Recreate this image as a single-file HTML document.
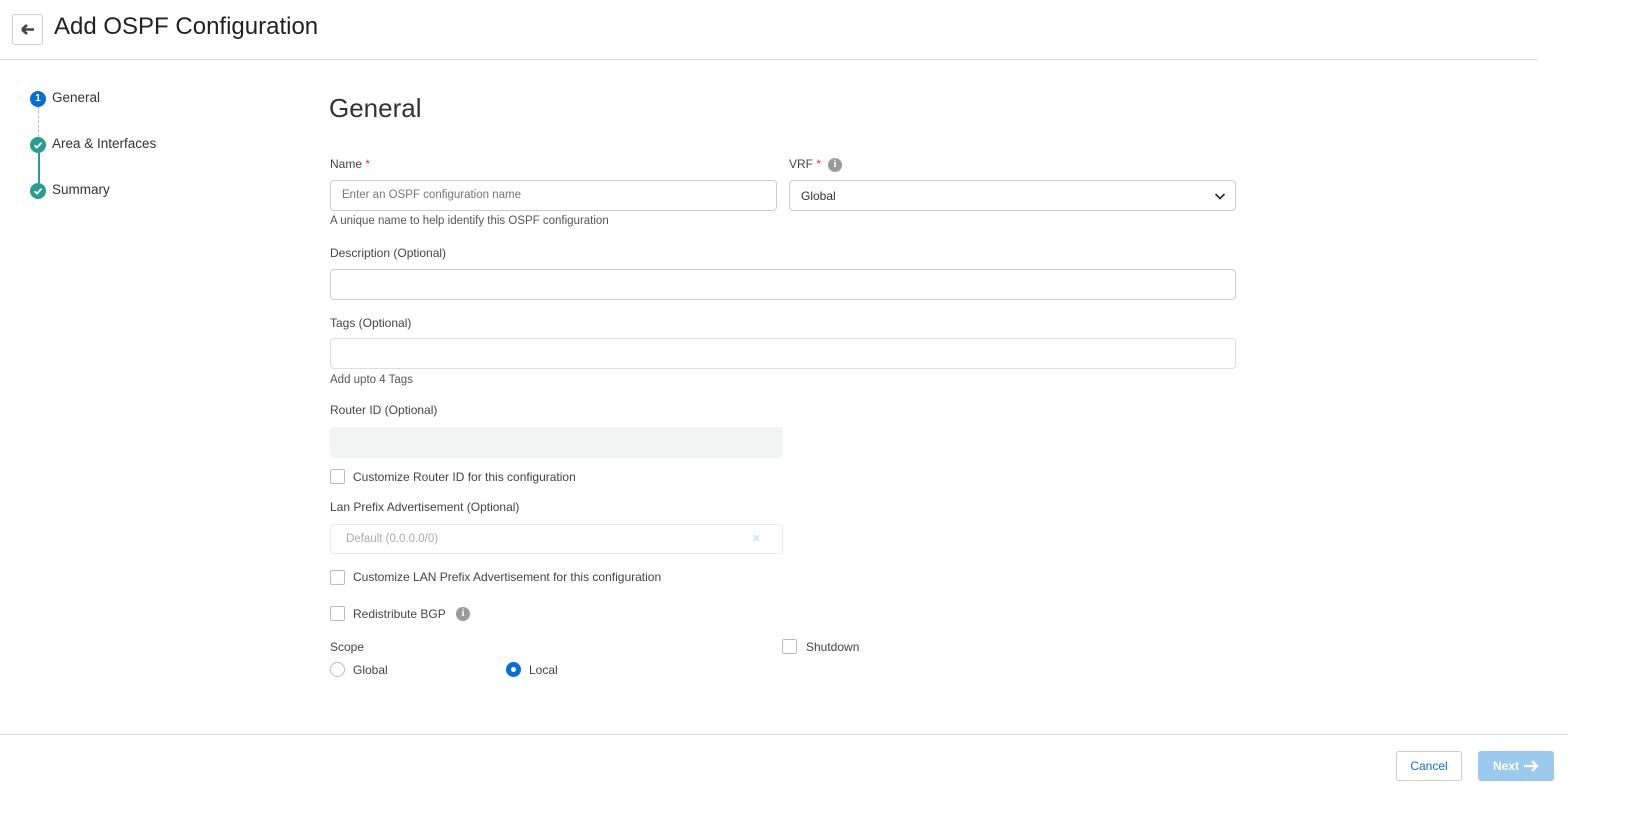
<!DOCTYPE html>
<html><head><meta charset="utf-8"><style>
*{box-sizing:border-box;margin:0;padding:0}
body{width:1626px;height:815px;background:#fff;font-family:"Liberation Sans",sans-serif;color:#333;position:relative;overflow:hidden}
.a{position:absolute;white-space:nowrap}
.lbl{font-size:12px;color:#444}
.help{font-size:11.5px;color:#555}
.inp{position:absolute;border:1px solid #ccc;border-radius:4px;background:#fff}
.cb{position:absolute;width:15px;height:15px;border:1px solid #bbb;border-radius:2px;background:#fff}
.ct{font-size:12px;color:#444}
.info{position:absolute;width:14px;height:14px;border-radius:50%;background:#9a9a9a;color:#fff;font-size:10px;font-weight:bold;text-align:center;line-height:14px;font-family:"Liberation Serif",serif}
.step{position:absolute;width:16px;height:16px;border-radius:50%;color:#fff;font-size:10px;font-weight:bold;text-align:center;line-height:16px}
.st{font-size:13.5px;color:#333}
</style></head><body>
<div class="a" style="left:12px;top:14px;width:31px;height:31px;border:1px solid #ccc;border-radius:3px;"><svg width="29" height="29" viewBox="0 0 29 29"><path d="M9 14.5H21M9 14.5l5-4.5M9 14.5l5 4.5" stroke="#444" stroke-width="2.6" fill="none"/></svg></div>
<div class="a" style="left:54px;top:13px;font-size:24px;color:#222">Add OSPF Configuration</div>
<div class="a" style="left:0;top:59px;width:1538px;height:1px;background:#d8d8d8"></div>

<div class="a" style="left:38px;top:106px;height:31px;border-left:1px dashed #bbb"></div>
<div class="a" style="left:38px;top:152px;width:2px;height:31px;background:#2a9d8f"></div>
<div class="step" style="left:30px;top:91px;background:#0a6ed1">1</div>
<div class="a st" style="left:52px;top:90px">General</div>
<div class="step" style="left:30px;top:137px;background:#2a9d8f"><svg width="16" height="16"><path d="M4.5 8.2l2.4 2.4 4.6-4.8" stroke="#fff" stroke-width="1.8" fill="none"/></svg></div>
<div class="a st" style="left:52px;top:136px">Area &amp; Interfaces</div>
<div class="step" style="left:30px;top:183px;background:#2a9d8f"><svg width="16" height="16"><path d="M4.5 8.2l2.4 2.4 4.6-4.8" stroke="#fff" stroke-width="1.8" fill="none"/></svg></div>
<div class="a st" style="left:52px;top:182px">Summary</div>

<div class="a" style="left:329px;top:93px;font-size:26px;font-weight:300;color:#333">General</div>

<div class="a lbl" style="left:330px;top:157px">Name <span style="color:#e0302f">*</span></div>
<div class="inp" style="left:330px;top:180px;width:447px;height:31px"><span class="a" style="left:11px;top:8px;font-size:11.5px;color:#777">Enter an OSPF configuration name</span></div>
<div class="a help" style="left:330px;top:215px">A unique name to help identify this OSPF configuration</div>

<div class="a lbl" style="left:789px;top:157px">VRF <span style="color:#e0302f">*</span></div>
<div class="info" style="left:828px;top:158px">i</div>
<div class="inp" style="left:789px;top:180px;width:447px;height:31px"><span class="a" style="left:11px;top:8px;font-size:12px;color:#333">Global</span><svg class="a" style="left:424px;top:9px" width="12" height="12"><path d="M1.5 4l4.5 4.5L10.5 4" stroke="#333" stroke-width="1.8" fill="none"/></svg></div>

<div class="a lbl" style="left:330px;top:246px">Description (Optional)</div>
<div class="inp" style="left:330px;top:269px;width:906px;height:31px"></div>

<div class="a lbl" style="left:330px;top:316px">Tags (Optional)</div>
<div class="inp" style="left:330px;top:338px;width:906px;height:31px;border-color:#ddd"></div>
<div class="a help" style="left:330px;top:374px">Add upto 4 Tags</div>

<div class="a lbl" style="left:330px;top:403px">Router ID (Optional)</div>
<div class="inp" style="left:330px;top:427px;width:453px;height:31px;background:#f2f3f3;border-color:#f2f3f3"></div>

<div class="cb" style="left:330px;top:469px"></div>
<div class="a ct" style="left:353px;top:470px">Customize Router ID for this configuration</div>

<div class="a lbl" style="left:330px;top:500px">Lan Prefix Advertisement (Optional)</div>
<div class="inp" style="left:330px;top:524px;width:453px;height:30px;border-color:#e8e8e8"><span class="a" style="left:15px;top:8px;font-size:11.5px;color:#aaa">Default (0.0.0.0/0)</span><span class="a" style="left:421px;top:5px;font-size:15px;color:#c5d8ea">×</span></div>

<div class="cb" style="left:330px;top:570px"></div>
<div class="a ct" style="left:353px;top:570px">Customize LAN Prefix Advertisement for this configuration</div>

<div class="cb" style="left:330px;top:606px"></div>
<div class="a ct" style="left:353px;top:607px">Redistribute BGP</div>
<div class="info" style="left:456px;top:607px">i</div>

<div class="a lbl" style="left:330px;top:640px">Scope</div>
<div class="cb" style="left:782px;top:639px"></div>
<div class="a ct" style="left:806px;top:640px">Shutdown</div>

<div class="a" style="left:330px;top:662px;width:15px;height:15px;border:1px solid #bbb;border-radius:50%"></div>
<div class="a ct" style="left:353px;top:663px">Global</div>
<div class="a" style="left:506px;top:662px;width:15px;height:15px;border-radius:50%;background:#0a6ed1"><div class="a" style="left:5px;top:5px;width:5px;height:5px;border-radius:50%;background:#fff"></div></div>
<div class="a ct" style="left:529px;top:663px">Local</div>

<div class="a" style="left:0;top:734px;width:1568px;height:1px;background:#d8d8d8"></div>
<div class="a" style="left:1396px;top:751px;width:66px;height:30px;border:1px solid #ccc;border-radius:3px;text-align:center;line-height:28px;font-size:12px;color:#0a6ed1">Cancel</div>
<div class="a" style="left:1478px;top:751px;width:76px;height:30px;border-radius:3px;background:#9cc9ee;color:#fff;font-size:12px;font-weight:bold;line-height:30px;padding-left:15px">Next <svg style="position:absolute;left:45px;top:8px" width="16" height="14"><path d="M1 7H14M9 2l5 5-5 5" stroke="#fff" stroke-width="2.2" fill="none"/></svg></div>
</body></html>
